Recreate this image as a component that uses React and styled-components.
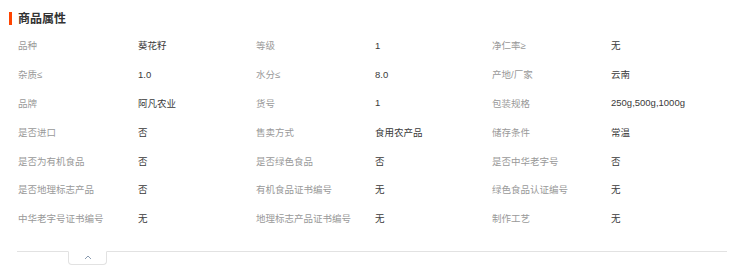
import React from 'react'
import styled, {createGlobalStyle} from 'styled-components'

const GlobalStyle = createGlobalStyle`
body{
  margin:0;
  background:#fff;
  font-family:"Liberation Sans","Noto Sans CJK SC",sans-serif;
}
`

const attrs = [
  ['品种', '葵花籽'], ['等级', '1'], ['净仁率≥', '无'],
  ['杂质≤', '1.0'], ['水分≤', '8.0'], ['产地/厂家', '云南'],
  ['品牌', '阿凡农业'], ['货号', '1'], ['包装规格', '250g,500g,1000g'],
  ['是否进口', '否'], ['售卖方式', '食用农产品'], ['储存条件', '常温'],
  ['是否为有机食品', '否'], ['是否绿色食品', '否'], ['是否中华老字号', '否'],
  ['是否地理标志产品', '否'], ['有机食品证书编号', '无'], ['绿色食品认证编号', '无'],
  ['中华老字号证书编号', '无'], ['地理标志产品证书编号', '无'], ['制作工艺', '无'],
]

const App = () => {
  return (
    <Container>
      <GlobalStyle />
      <Title>商品属性</Title>
      <AttrGrid>
        {attrs.map(([label, value]) => (
          <React.Fragment key={label}>
            <Label>{label}</Label>
            <Value>{value}</Value>
          </React.Fragment>
        ))}
      </AttrGrid>
      <Footer>
        <FoldTab>
          <svg width="8" height="5" viewBox="0 0 8 5">
            <path d="M1 4 L4 1 L7 4" fill="none" stroke="#8a9bb0" strokeWidth="1" />
          </svg>
        </FoldTab>
      </Footer>
    </Container>
  )
}

export default App

const Container = styled.div`
width:731px;
height:268px;
padding:12px 4px 0 9px;
box-sizing:border-box;
`
const Title = styled.h3`
margin:0;
display:flex;
align-items:center;
height:12px;
padding-top:1px;
border-left:3px solid #f40;
padding-left:6px;
font-size:12px;
font-weight:bold;
color:#333;
line-height:12px;
`
const AttrGrid = styled.div`
display:grid;
grid-template-columns:120px 118px 119px 117px 119px auto;
grid-auto-rows:28.8px;
margin-top:6px;
padding-left:9px;
`
const Label = styled.div`
display:flex;
align-items:center;
font-size:9.5px;
color:#999;
white-space:nowrap;
`
const Value = styled(Label)`
color:#3a3a3a;
`
const Footer = styled.div`
margin:18px 0 0 8px;
border-top:1px solid #e2e2e2;
padding-left:51px;
`
const FoldTab = styled.div`
width:39px;
height:14px;
margin-top:-1px;
border:1px solid #e2e2e2;
border-top:1px solid #fff;
border-radius:0 0 4px 4px;
display:flex;
justify-content:center;
align-items:flex-start;
padding-top:3px;
box-sizing:border-box;
`
